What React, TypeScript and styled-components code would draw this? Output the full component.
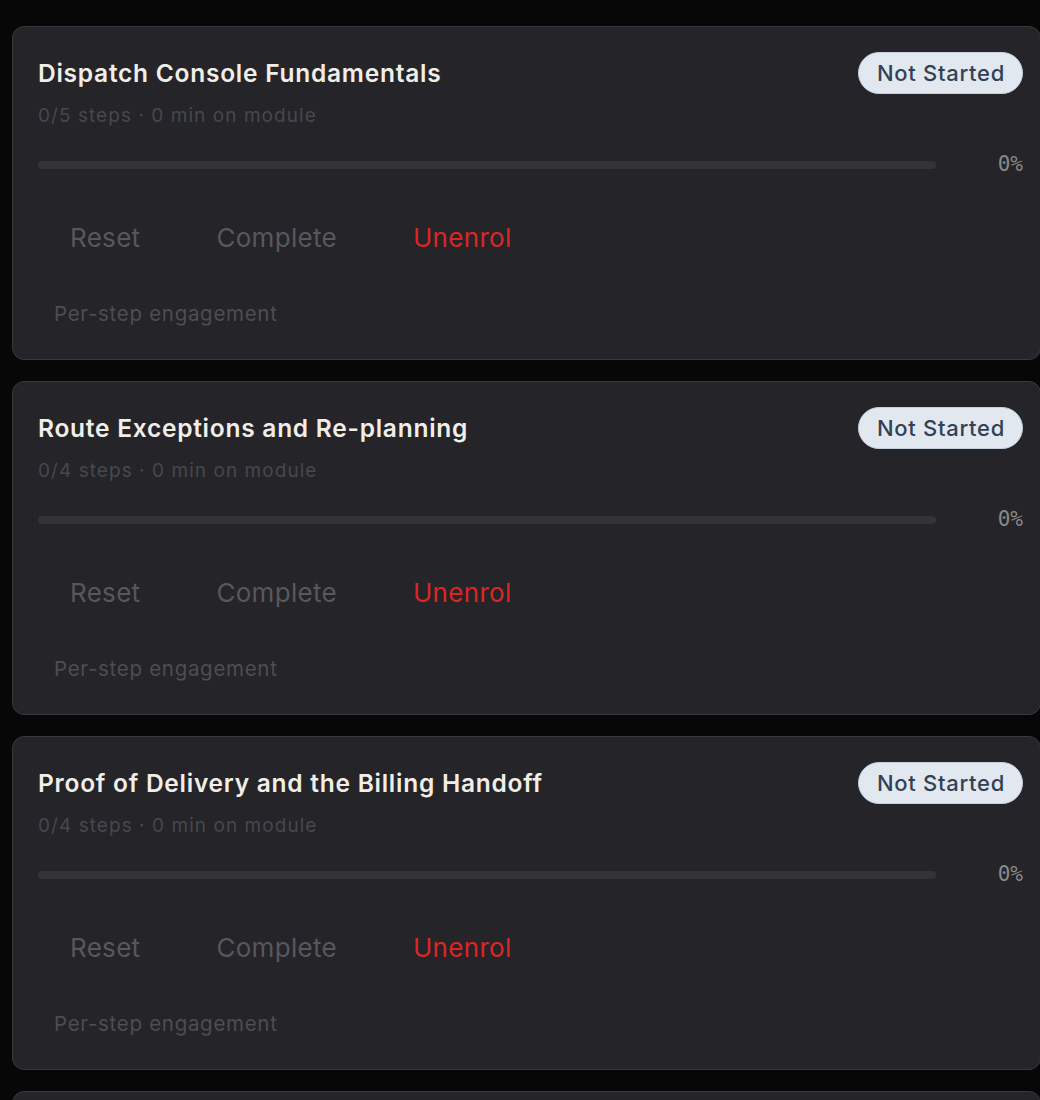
import React from "react";
import styled, { createGlobalStyle } from "styled-components";

const Global = createGlobalStyle`
  html, body {
    margin: 0;
    padding: 0;
    background: #070707;
    overflow-x: hidden;
  }
  body {
    font-family: Inter, "Noto Sans", "Liberation Sans", sans-serif;
  }
`;

const List = styled.div`
  display: flex;
  flex-direction: column;
  gap: 21px;
  padding: 26px 0 0 12px;
  width: 1029px;
`;

const Card = styled.section`
  background: #242429;
  border: 1px solid #38383d;
  border-radius: 12px;
  padding: 25px 17px 32px 25px;
`;

const Header = styled.div`
  display: flex;
  align-items: center;
  justify-content: space-between;
  height: 42px;
`;

const Title = styled.h2`
  margin: 0;
  font-size: 24.5px;
  line-height: 30px;
  font-weight: 600;
  color: #f1eee8;
  letter-spacing: 0.75px;
`;

const Badge = styled.span`
  box-sizing: border-box;
  height: 42px;
  padding: 0 17px 0 18px;
  display: inline-flex;
  align-items: center;
  border-radius: 999px;
  background: #e2e8f0;
  border: 1.5px solid #c5cfdc;
  color: #334155;
  font-size: 22px;
  font-weight: 500;
  letter-spacing: 0.7px;
`;

const Meta = styled.div`
  margin-top: 9px;
  font-size: 19px;
  line-height: 26px;
  color: #48484b;
  letter-spacing: 1.05px;
`;

const ProgressRow = styled.div`
  margin-top: 24px;
  height: 24px;
  display: flex;
  align-items: center;
`;

const Track = styled.div`
  flex: 1;
  height: 8px;
  border-radius: 999px;
  background: #333338;
  overflow: hidden;
`;

const Fill = styled.div`
  height: 100%;
  background: #6366f1;
`;

const Percent = styled.span`
  width: 87px;
  text-align: right;
  font-family: "DejaVu Sans Mono", "Liberation Mono", monospace;
  font-size: 21px;
  line-height: 24px;
  color: #8a8a84;
  margin-top: -2px;
`;

const Actions = styled.div`
  margin-top: 38px;
  display: flex;
  gap: 12px;
`;

const ActionButton = styled.button<{ $danger?: boolean }>`
  height: 44px;
  padding: 0 32px;
  border: none;
  background: transparent;
  font-family: inherit;
  font-size: 26px;
  font-weight: 400;
  letter-spacing: 0.3px;
  color: ${(p) => (p.$danger ? "#dc2626" : "#58585a")};
  cursor: pointer;
`;

const Engagement = styled.div`
  margin-top: 42px;
  padding-left: 16px;
  font-size: 20.5px;
  line-height: 26px;
  color: #4e4e50;
  letter-spacing: 0.7px;
`;

type Module = { title: string; steps: number; done: number; minutes: number };

const modules: Module[] = [
  { title: "Dispatch Console Fundamentals", steps: 5, done: 0, minutes: 0 },
  { title: "Route Exceptions and Re-planning", steps: 4, done: 0, minutes: 0 },
  { title: "Proof of Delivery and the Billing Handoff", steps: 4, done: 0, minutes: 0 },
  { title: "Carrier Settlement Basics", steps: 4, done: 0, minutes: 0 },
];

export default function App() {
  return (
    <>
      <Global />
      <List>
        {modules.map((m) => {
          const pct = Math.round((m.done / m.steps) * 100);
          return (
            <Card key={m.title}>
              <Header>
                <Title>{m.title}</Title>
                <Badge>Not Started</Badge>
              </Header>
              <Meta>
                {m.done}/{m.steps} steps · {m.minutes} min on module
              </Meta>
              <ProgressRow>
                <Track>
                  <Fill style={{ width: `${pct}%` }} />
                </Track>
                <Percent>{pct}%</Percent>
              </ProgressRow>
              <Actions>
                <ActionButton>Reset</ActionButton>
                <ActionButton>Complete</ActionButton>
                <ActionButton $danger>Unenrol</ActionButton>
              </Actions>
              <Engagement>Per-step engagement</Engagement>
            </Card>
          );
        })}
      </List>
    </>
  );
}
